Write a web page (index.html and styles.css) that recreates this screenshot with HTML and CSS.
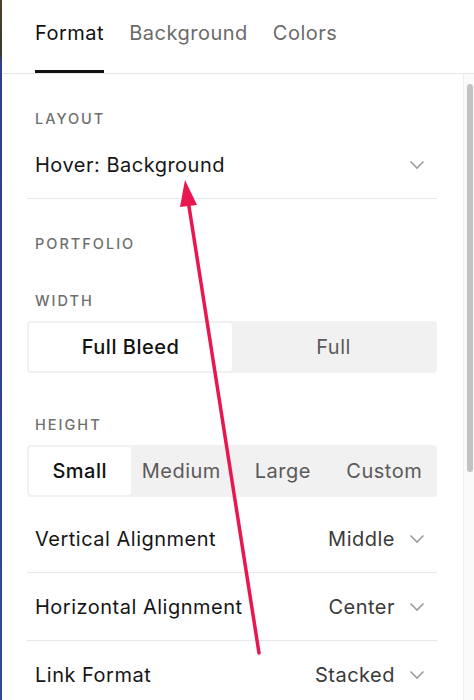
FILE: index.html
```html
<!DOCTYPE html>
<html lang="en">
  <head>
    <meta charset="UTF-8" />
    <meta name="viewport" content="width=device-width, initial-scale=1.0" />
    <title>Section Format</title>
    <link rel="stylesheet" href="styles.css">
  </head>
  <body>
    <div class="edge"></div>
    <div class="panel">
      <nav class="tabs">
        <span class="tab active">Format</span>
        <span class="tab">Background</span>
        <span class="tab">Colors</span>
      </nav>
      <div class="main">
        <div class="content">
          <div class="label label-first">LAYOUT</div>
          <div class="row">
            <span class="row-title">Hover: Background</span>
            <span class="row-value">
              <svg class="chevron" viewBox="0 0 16 10"><path d="M1.5 1.5l6.5 6.5 6.5-6.5" /></svg>
            </span>
          </div>

          <div class="label label-section">PORTFOLIO</div>
          <div class="label label-field">WIDTH</div>
          <div class="segments">
            <span class="segment selected">Full Bleed</span>
            <span class="segment">Full</span>
          </div>

          <div class="label label-field label-gap">HEIGHT</div>
          <div class="segments">
            <span class="segment selected">Small</span>
            <span class="segment">Medium</span>
            <span class="segment">Large</span>
            <span class="segment">Custom</span>
          </div>

          <div class="rows">
            <div class="row">
              <span class="row-title">Vertical Alignment</span>
              <span class="row-value">Middle
                <svg class="chevron" viewBox="0 0 16 10"><path d="M1.5 1.5l6.5 6.5 6.5-6.5" /></svg>
              </span>
            </div>
            <div class="row">
              <span class="row-title">Horizontal Alignment</span>
              <span class="row-value">Center
                <svg class="chevron" viewBox="0 0 16 10"><path d="M1.5 1.5l6.5 6.5 6.5-6.5" /></svg>
              </span>
            </div>
            <div class="row">
              <span class="row-title">Link Format</span>
              <span class="row-value">Stacked
                <svg class="chevron" viewBox="0 0 16 10"><path d="M1.5 1.5l6.5 6.5 6.5-6.5" /></svg>
              </span>
            </div>
          </div>
        </div>
        <div class="scrollbar">
          <div class="thumb"></div>
        </div>
      </div>
    </div>

    <!-- annotation arrow drawn over the panel -->
    <svg class="arrow" viewBox="0 0 474 700">
      <line x1="259" y1="653" x2="188" y2="200" />
      <polygon points="185,180 197,205 180,207" />
    </svg>
  </body>
</html>
```

FILE: styles.css
```css
body {
  margin: 0;
  height: 700px;
  display: flex;
  overflow: hidden;
  background: #fff;
  font-family: Inter, "Liberation Sans", sans-serif;
  color: #161616;
}
.edge {
  width: 2px;
  flex-shrink: 0;
  background: linear-gradient(#4a4224 0, #3b3a30 55px, #2f3f8c 60px, #34479a 100%);
}
.panel {
  flex: 1;
  display: flex;
  flex-direction: column;
  min-width: 0;
}
.tabs {
  display: flex;
  gap: 25px;
  height: 74px;
  box-sizing: border-box;
  padding-left: 33px;
  border-bottom: 1px solid #e6e6e6;
}
.tab {
  display: flex;
  align-items: center;
  padding-bottom: 4px;
  border-bottom: 3px solid transparent;
  font-size: 20px;
  letter-spacing: 0.5px;
  color: #6b6b6b;
}
.tab.active {
  color: #111;
  border-bottom-color: #111;
}
.main {
  flex: 1;
  display: flex;
  min-height: 0;
}
.content {
  flex: 1;
  padding: 0 26px 0 25px;
}
.label {
  padding-left: 8px;
  font-size: 14.5px;
  line-height: 20px;
  letter-spacing: 2px;
  font-weight: 500;
  color: #6f6f6f;
}
.label-first {
  margin-top: 35px;
  margin-bottom: 2px;
}
.label-section {
  margin-top: 35px;
}
.label-field {
  margin-top: 37px;
  margin-bottom: 10px;
}
.label-gap {
  margin-top: 42px;
}
.row {
  display: flex;
  align-items: center;
  justify-content: space-between;
  height: 67px;
  padding: 0 12px 0 8px;
  border-bottom: 1px solid #e8e8e8;
  font-size: 20px;
  letter-spacing: 0.5px;
}
.row-title {
  color: #161616;
}
.row-value {
  display: flex;
  align-items: center;
  gap: 14px;
  color: #3a3a3a;
}
.chevron {
  width: 16px;
  height: 10px;
  fill: none;
  stroke: #9c9c9c;
  stroke-width: 1.6;
}
.segments {
  display: flex;
  height: 52px;
  box-sizing: border-box;
  padding: 2px;
  background: #f1f1f1;
  border-radius: 4px;
}
.segment {
  flex: 1;
  display: flex;
  align-items: center;
  justify-content: center;
  font-size: 20px;
  letter-spacing: 0.5px;
  color: #5a5a5a;
  border-radius: 3px;
}
.segment.selected {
  background: #fff;
  color: #111;
  font-weight: 500;
}
.rows {
  margin-top: 8px;
}
.rows .row:last-child {
  border-bottom: none;
}
.scrollbar {
  width: 10px;
  flex-shrink: 0;
  border-left: 1px solid #ececec;
  background: #fafafa;
  padding-top: 10px;
}
.thumb {
  width: 6px;
  height: 388px;
  margin-left: 3px;
  border-radius: 4px;
  background: #c2c2c2;
}
.arrow {
  position: absolute;
  top: 0;
  left: 0;
  width: 474px;
  height: 700px;
  pointer-events: none;
}
.arrow line {
  stroke: #e8174f;
  stroke-width: 3.5;
  stroke-linecap: round;
}
.arrow polygon {
  fill: #e8174f;
}
```
